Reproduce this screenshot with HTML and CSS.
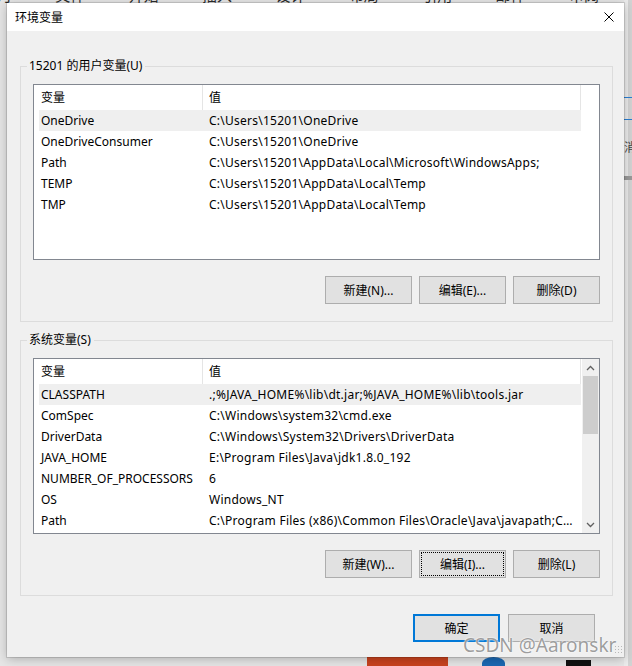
FILE: index.html
```html
<!DOCTYPE html>
<html lang="zh-CN">

<head>
    <meta charset="UTF-8">
    <meta name="viewport" content="width=device-width, initial-scale=1.0">
    <title>环境变量</title>
    <link rel="stylesheet" href="styles.css">
</head>

<body>
    <div class="desktop">
        <!-- whatever sits behind the dialog -->
        <div class="behind-ribbon">月 文件 开始 插入 设计 布局 引用 邮件 审阅 视图 帮助 另</div>
        <div class="behind-side">
            <span class="side-line"></span>
            <span class="side-line second"></span>
            <span class="side-text">消</span>
            <span class="side-bar"></span>
        </div>
        <div class="taskbar">
            <span class="app app-ppt"></span>
            <span class="app app-edge"></span>
            <span class="app app-term"></span>
        </div>

        <div class="dialog">
            <div class="titlebar">
                <span class="title">环境变量</span>
                <span class="close">
                    <svg width="10" height="10" viewBox="0 0 10 10">
                        <path d="M0.5 0.5 L9.5 9.5 M9.5 0.5 L0.5 9.5" stroke="#000" stroke-width="1" fill="none" />
                    </svg>
                </span>
            </div>

            <div class="dialog-body">
                <!-- user variables -->
                <div class="group">
                    <div class="group-title">15201 的用户变量(U)</div>
                    <div class="list">
                        <div class="list-content">
                            <div class="list-head">
                                <div class="col-name">变量</div>
                                <div class="col-value">值</div>
                            </div>
                            <div class="row selected">
                                <div class="col-name">OneDrive</div>
                                <div class="col-value">C:\Users\15201\OneDrive</div>
                            </div>
                            <div class="row">
                                <div class="col-name">OneDriveConsumer</div>
                                <div class="col-value">C:\Users\15201\OneDrive</div>
                            </div>
                            <div class="row">
                                <div class="col-name">Path</div>
                                <div class="col-value">C:\Users\15201\AppData\Local\Microsoft\WindowsApps;</div>
                            </div>
                            <div class="row">
                                <div class="col-name">TEMP</div>
                                <div class="col-value">C:\Users\15201\AppData\Local\Temp</div>
                            </div>
                            <div class="row">
                                <div class="col-name">TMP</div>
                                <div class="col-value">C:\Users\15201\AppData\Local\Temp</div>
                            </div>
                        </div>
                    </div>
                    <div class="btn-row">
                        <button class="btn">新建(N)...</button>
                        <button class="btn">编辑(E)...</button>
                        <button class="btn">删除(D)</button>
                    </div>
                </div>

                <!-- system variables -->
                <div class="group">
                    <div class="group-title">系统变量(S)</div>
                    <div class="list">
                        <div class="list-content">
                            <div class="list-head">
                                <div class="col-name">变量</div>
                                <div class="col-value">值</div>
                            </div>
                            <div class="row selected">
                                <div class="col-name">CLASSPATH</div>
                                <div class="col-value">.;%JAVA_HOME%\lib\dt.jar;%JAVA_HOME%\lib\tools.jar</div>
                            </div>
                            <div class="row">
                                <div class="col-name">ComSpec</div>
                                <div class="col-value">C:\Windows\system32\cmd.exe</div>
                            </div>
                            <div class="row">
                                <div class="col-name">DriverData</div>
                                <div class="col-value">C:\Windows\System32\Drivers\DriverData</div>
                            </div>
                            <div class="row">
                                <div class="col-name">JAVA_HOME</div>
                                <div class="col-value">E:\Program Files\Java\jdk1.8.0_192</div>
                            </div>
                            <div class="row">
                                <div class="col-name">NUMBER_OF_PROCESSORS</div>
                                <div class="col-value">6</div>
                            </div>
                            <div class="row">
                                <div class="col-name">OS</div>
                                <div class="col-value">Windows_NT</div>
                            </div>
                            <div class="row">
                                <div class="col-name">Path</div>
                                <div class="col-value">C:\Program Files (x86)\Common Files\Oracle\Java\javapath;C:\WINDOWS\system32</div>
                            </div>
                        </div>
                        <div class="scrollbar">
                            <span class="arrow">
                                <svg width="9" height="6" viewBox="0 0 9 6">
                                    <path d="M1 5 L4.5 1.5 L8 5" stroke="#606060" stroke-width="1.3" fill="none" />
                                </svg>
                            </span>
                            <span class="thumb"></span>
                            <span class="track"></span>
                            <span class="arrow">
                                <svg width="9" height="6" viewBox="0 0 9 6">
                                    <path d="M1 1 L4.5 4.5 L8 1" stroke="#606060" stroke-width="1.3" fill="none" />
                                </svg>
                            </span>
                        </div>
                    </div>
                    <div class="btn-row">
                        <button class="btn">新建(W)...</button>
                        <button class="btn focused">编辑(I)...</button>
                        <button class="btn">删除(L)</button>
                    </div>
                </div>

                <div class="btn-row dialog-actions">
                    <button class="btn default">确定</button>
                    <button class="btn">取消</button>
                </div>
            </div>
            <span class="grip"></span>
        </div>

        <div class="watermark">CSDN @Aaronskr</div>
    </div>
</body>

</html>
```

FILE: styles.css
```css
body {
    margin: 0;
    background-color: #e4e4e4;
    font-family: "Noto Sans", "Noto Sans CJK SC", sans-serif;
    font-size: 12px;
    color: #000;
}

.desktop {
    position: relative;
    width: 632px;
    height: 666px;
    overflow: hidden;
    padding: 3px 0 0 7px;
    box-sizing: border-box;
    background: linear-gradient(to right, #e6e6e6 0, #e6e6e6 624px, #ececec 624px, #ececec 628px, #d3d3d3 628px);
}

/* window behind the dialog */
.behind-ribbon {
    position: absolute;
    top: -13px;
    left: -3px;
    width: 700px;
    white-space: nowrap;
    font-family: "Noto Sans CJK SC", sans-serif;
    font-size: 15px;
    line-height: 16px;
    word-spacing: 40px;
    color: #2b2b2b;
}

.behind-side {
    position: absolute;
    top: 0;
    left: 624px;
    width: 8px;
    height: 200px;
}

.side-line {
    position: absolute;
    left: 0;
    top: 97px;
    width: 8px;
    height: 1px;
    background-color: #2a7fd4;
}

.side-line.second {
    top: 119px;
}

.side-text {
    position: absolute;
    left: 0;
    top: 138px;
    font-family: "Noto Sans CJK SC", sans-serif;
    font-size: 12px;
    color: #444;
}

.side-bar {
    position: absolute;
    left: 0;
    top: 176px;
    width: 8px;
    height: 4px;
    background-color: #9a9a9a;
}

.taskbar .app {
    position: absolute;
    top: 657px;
    height: 12px;
}

.app-ppt {
    left: 367px;
    width: 81px;
    background-color: #c9431f;
}

.app-edge {
    left: 482px;
    width: 23px;
    border-radius: 50% 50% 0 0;
    background-color: #1b68b3;
}

.app-term {
    left: 566px;
    top: 660px !important;
    width: 25px;
    background-color: #111;
}

/* dialog */
.dialog {
    position: relative;
    z-index: 1;
    width: 617px;
    height: 654px;
    background-color: #f0f0f0;
    box-shadow: 0 0 0 1px rgba(0, 0, 0, 0.12), 0 2px 10px rgba(0, 0, 0, 0.25);
}

.titlebar {
    height: 28px;
    background-color: #fff;
    display: flex;
    align-items: center;
    justify-content: space-between;
    padding: 0 10px 2px 8px;
    box-sizing: border-box;
}

.title {
    font-family: "Noto Sans CJK SC", sans-serif;
    font-size: 12px;
}

.close {
    display: flex;
    padding-top: 1px;
}

.dialog-body {
    display: flex;
    flex-direction: column;
}

.group {
    margin: 35px 0 0 13px;
    width: 593px;
    border: 1px solid #dcdcdc;
    padding: 0 12px 17px;
    box-sizing: border-box;
}

.group + .group {
    margin-top: 18px;
}

.group-title {
    width: max-content;
    margin: -9px 0 0 -6px;
    padding: 0 3px 0 2px;
    line-height: 16px;
    background-color: #f0f0f0;
}

.list {
    margin-top: 10px;
    height: 176px;
    border: 1px solid #828790;
    background-color: #fff;
    box-sizing: border-box;
    display: flex;
}

.list-content {
    flex: 1;
    overflow: hidden;
}

.list-head,
.row {
    display: flex;
    width: 542px;
    margin-left: 5px;
}

.list-head {
    height: 25px;
    line-height: 25px;
}

.list-head .col-name {
    border-right: 1px solid #e5e5e5;
}

.list-head .col-value {
    border-right: 1px solid #e5e5e5;
}

.row {
    height: 21px;
    line-height: 21px;
}

.row.selected {
    background-color: #efefef;
}

.col-name {
    width: 164px;
    padding-left: 2px;
    box-sizing: border-box;
    white-space: nowrap;
    flex-shrink: 0;
}

.col-value {
    flex: 1;
    padding: 0 6px;
    white-space: nowrap;
    overflow: hidden;
    text-overflow: ellipsis;
}

.row .col-value {
    letter-spacing: 0.25px;
}

.scrollbar {
    width: 17px;
    background-color: #f0f0f0;
    display: flex;
    flex-direction: column;
}

.scrollbar .arrow {
    height: 17px;
    display: flex;
    align-items: center;
    justify-content: center;
}

.scrollbar .thumb {
    height: 58px;
    margin: 0 1px;
    background-color: #cdcdcd;
}

.scrollbar .track {
    flex: 1;
}

.btn-row {
    display: flex;
    justify-content: flex-end;
    gap: 7px;
    margin-top: 16px;
}

.btn {
    width: 87px;
    height: 28px;
    background-color: #e1e1e1;
    border: 1px solid #adadad;
    font-family: "Noto Sans", "Noto Sans CJK SC", sans-serif;
    font-size: 12px;
    color: #000;
    padding: 0;
    box-sizing: border-box;
}

.btn.focused {
    outline: 1px dotted #000;
    outline-offset: -3px;
}

.btn.default {
    border: 2px solid #0078d7;
}

.dialog-actions {
    margin-top: 18px;
    padding-right: 29px;
    gap: 8px;
}

.grip {
    position: absolute;
    right: 2px;
    bottom: 4px;
    width: 8px;
    height: 8px;
    background-image: radial-gradient(circle, #b8b8b8 0.8px, transparent 1px);
    background-size: 3px 3px;
}

.watermark {
    position: absolute;
    z-index: 2;
    left: 463px;
    top: 633px;
    font-family: "Noto Sans", sans-serif;
    font-size: 19px;
    line-height: 24px;
    color: rgba(140, 140, 140, 0.85);
    text-shadow: 0 0 2px #fff, 0 0 1px #fff;
    white-space: nowrap;
}
```
